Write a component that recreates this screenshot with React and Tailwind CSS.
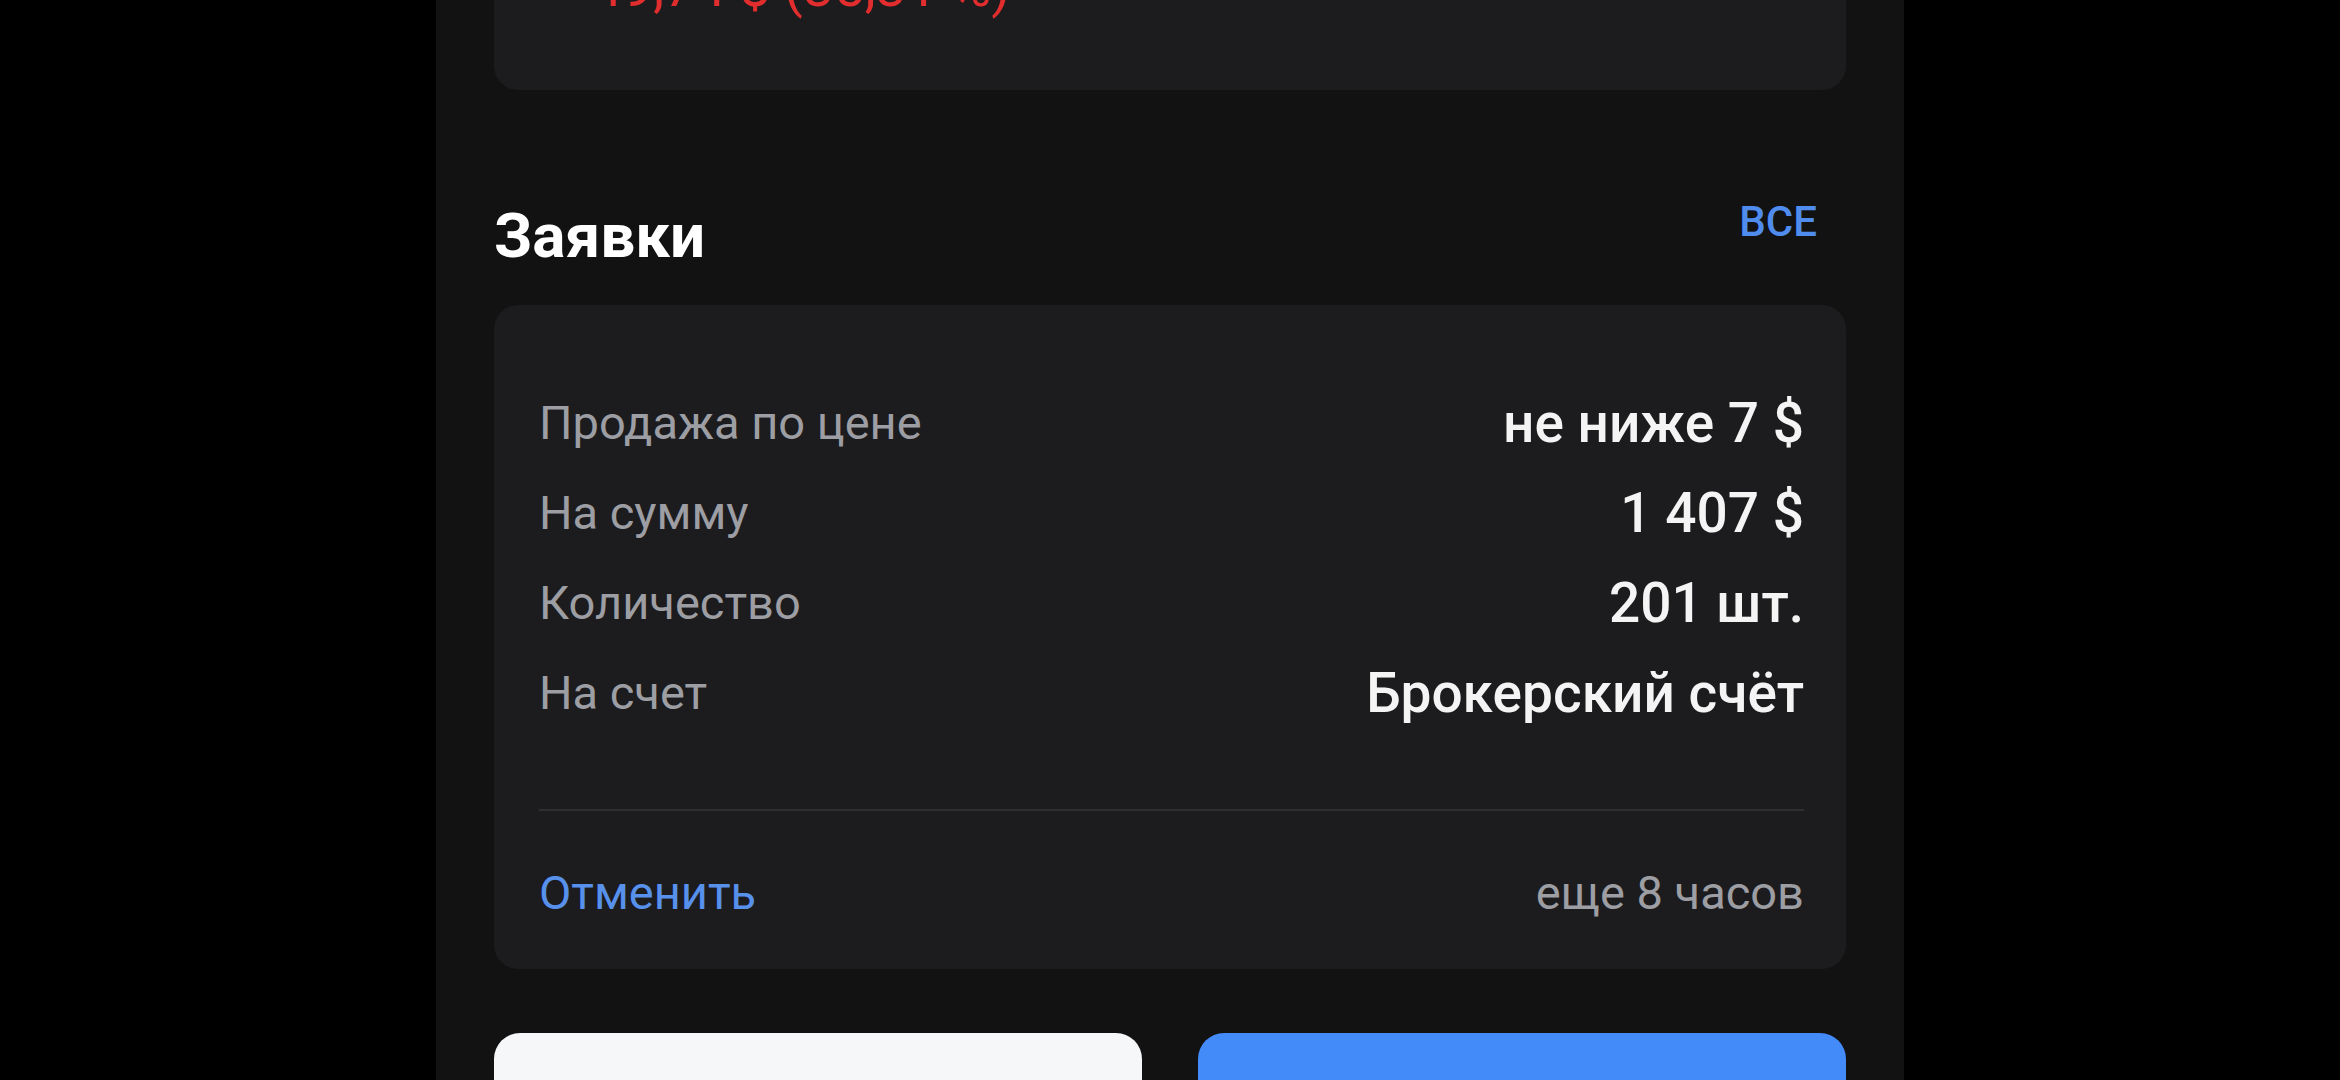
const rows = [
  { label: "Продажа по цене", value: "не ниже 7 $" },
  { label: "На сумму", value: "1 407 $" },
  { label: "Количество", value: "201 шт." },
  { label: "На счет", value: "Брокерский счёт" },
];

export default function App() {
  return (
    <div className="w-full h-[1080px] overflow-hidden bg-black font-['Roboto',sans-serif]">
      <div className="mx-auto w-[1468px] h-full flex flex-col bg-[#121212] px-[58px]">
        {/* Previous card (cut off at top) */}
        <div className="-mt-[65px] pt-[20px] pb-[71px] pl-[66px] rounded-[24px] bg-[#1c1c1e]">
          <p className="text-[55px] leading-[64px] text-[#e12d2d]">−49,74 $ (35,31 %)</p>
        </div>

        {/* Section header */}
        <div className="mt-[110px] flex items-start justify-between pr-[29px]">
          <h2 className="text-[62px] leading-[72px] font-bold text-white">Заявки</h2>
          <span className="-mt-[3px] text-[42px] leading-[50px] font-medium text-[#4f8cee]">ВСЕ</span>
        </div>

        {/* Order card */}
        <div className="mt-[33px] rounded-[24px] bg-[#1c1c1e] pl-[45px] pr-[42px] pt-[73px]">
          {rows.map((row) => (
            <div key={row.label} className="h-[90px] flex items-center justify-between">
              <span className="text-[47px] leading-[56px] text-[#9d9ea3]">{row.label}</span>
              <span className="text-[55px] leading-[64px] font-medium text-[#f4f4f5]">{row.value}</span>
            </div>
          ))}
          <div className="mt-[71px] h-[2px] bg-[#2e2f33]" />
          <div className="h-[158px] flex items-center justify-between pt-[6px]">
            <span className="text-[47px] leading-[56px] text-[#5791ec]">Отменить</span>
            <span className="text-[47px] leading-[56px] text-[#9d9ea3]">еще 8 часов</span>
          </div>
        </div>

        {/* Bottom buttons */}
        <div className="mt-[64px] grid grid-cols-2 gap-[56px]">
          <button className="h-[140px] rounded-[26px] bg-[#f6f7f9]" />
          <button className="h-[140px] rounded-[26px] bg-[#438bf8]" />
        </div>
      </div>
    </div>
  );
}
